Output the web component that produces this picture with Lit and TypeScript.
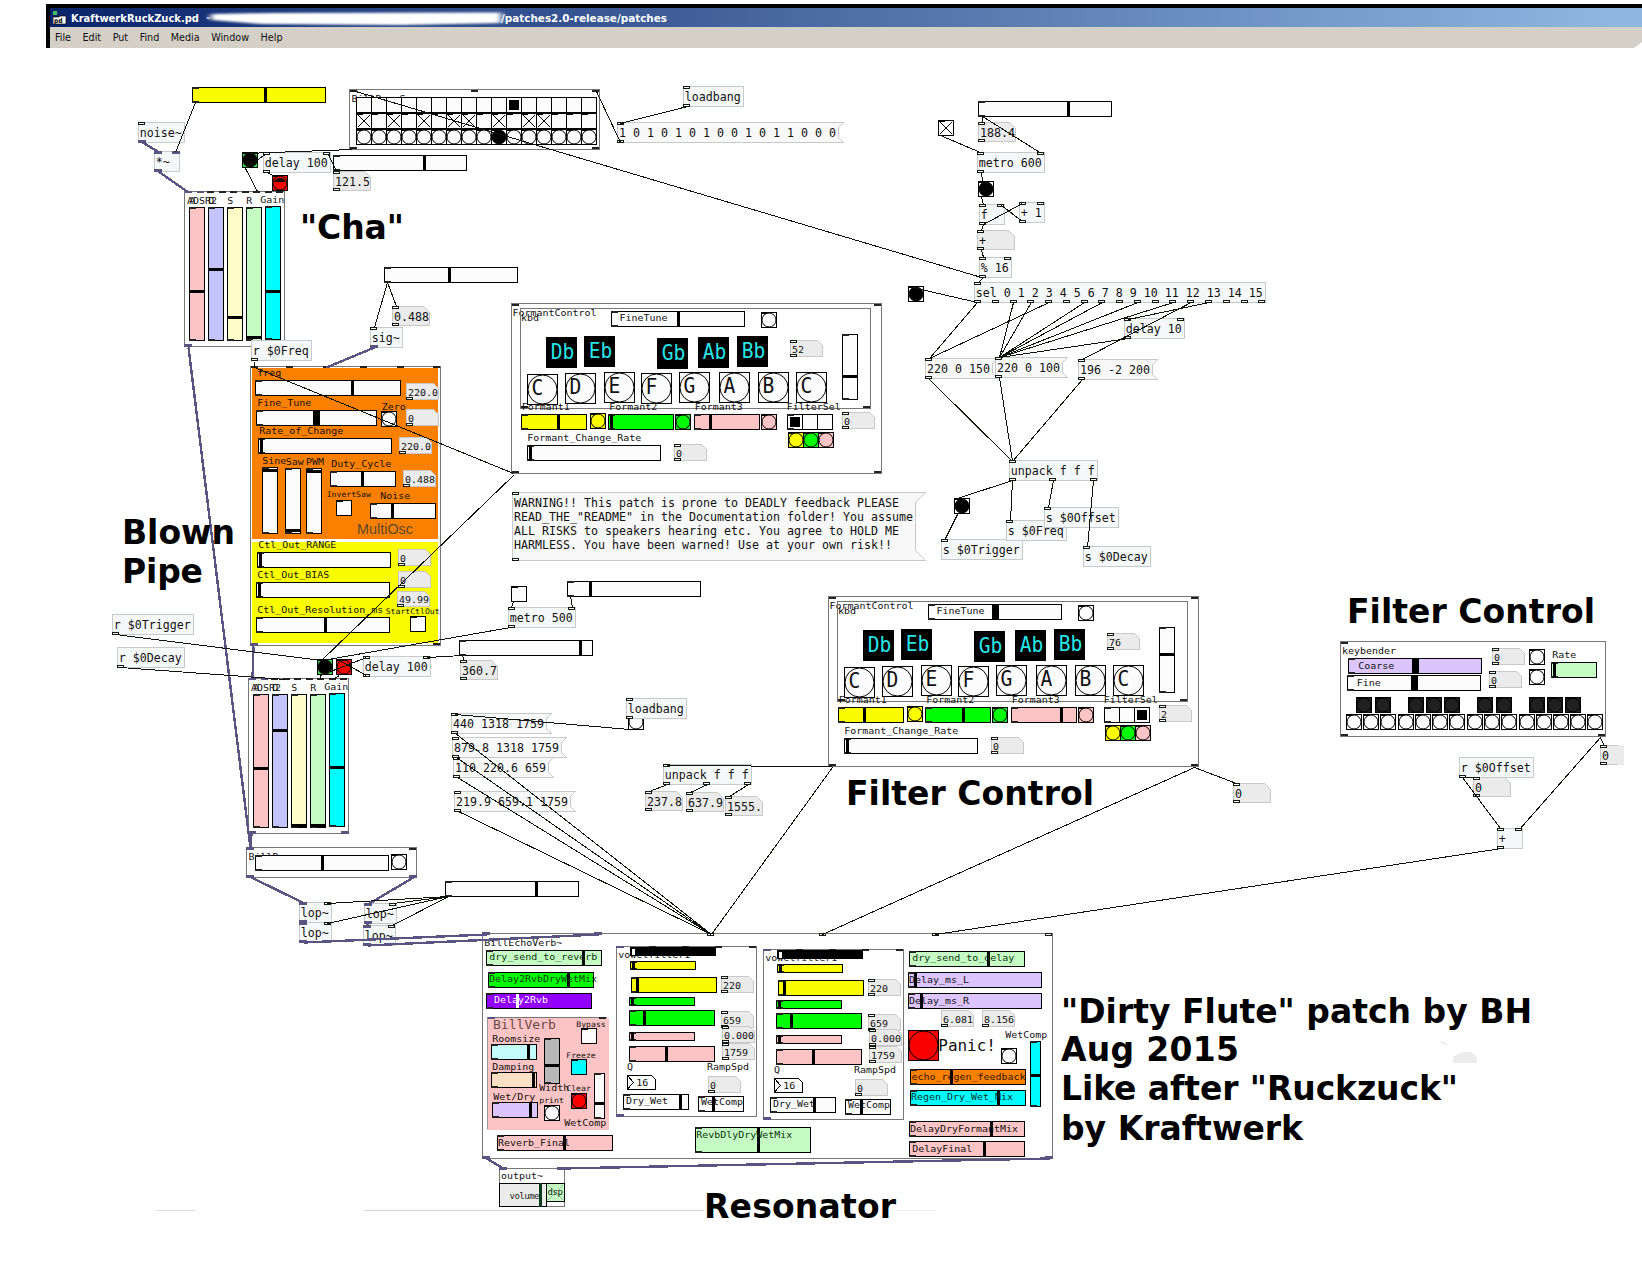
import { LitElement, html, svg, css } from "lit";
import { customElement } from "lit/decorators.js";

const PINK = "#fcc4c4";
const LILAC = "#c4c4fc";
const CREAM = "#fffcc8";
const MINT = "#c4fcc4";
const CYAN = "#00fcfc";
const YELLOW = "#fafc00";
const GREEN = "#00fc00";
const ORANGE = "#fc8000";
const VIOLET = "#dcc4fc";
const RED = "#fc0000";
const PAPER = "#fcfcfc";

type Io = [number, number?];

const box = (x: number, y: number, w: number, h: number, fill = PAPER, stroke = "#000") =>
  svg`<rect x=${x + 0.5} y=${y + 0.5} width=${w - 1} height=${h - 1} fill=${fill} stroke=${stroke}></rect>`;
const fillBox = (x: number, y: number, w: number, h: number, fill: string) =>
  svg`<rect x=${x} y=${y} width=${w} height=${h} fill=${fill}></rect>`;

// Character advance and glyph height of each patch font size
const METRICS: Record<number, [number, number]> = {
  8: [4.9, 7.6], 10: [6, 9.2], 12: [7, 12], 13: [7.85, 13], 16: [9.6, 16], 20: [11.8, 20.5],
};
const label = (x: number, y: number, s: string, size = 10, fill = "#111") => {
  const [adv, px] = METRICS[size];
  const dy = size === 10 ? -0.4 : 0;
  return svg`<text class="mono" x=${x} y=${y + dy} font-size=${px} fill=${fill} textLength=${s.length * adv} lengthAdjust="spacingAndGlyphs">${s}</text>`;
};
const caption = (x: number, y: number, s: string, w: number) =>
  svg`<text class="caption" x=${x} y=${y} textLength=${w}>${s}</text>`;

const port = (x: number, y: number) => box(x, y, 7, 3, "#fff", "#101a10");
const sigPort = (x: number, y: number) => fillBox(x, y, 8, 3, "#5a5482");
const tick = (x: number, y: number) => fillBox(x, y, 7, 2, "#222");
const ports = (x: number, y: number, list: Io[]) =>
  list.map(([dx, sig]) => (sig ? sigPort(x + dx, y) : port(x + dx, y)));

const obj = (x: number, y: number, w: number, s: string, ins: Io[] = [], outs: Io[] = []) => svg`
  ${box(x, y, w, 21, "#f5f8f8", "#c6caca")}
  ${label(x + 1.7, y + 15, s, 12)}${ports(x, y, ins)}${ports(x, y + 18, outs)}`;

const msg = (x: number, y: number, w: number, s: string, h = 21, n = 5) => svg`
  <path class="crisp" d=${`M${x + 0.5} ${y + 0.5}H${x + w - 0.5}L${x + w - n - 0.5} ${y + n + 0.5}V${y + h - n - 0.5}L${x + w - 0.5} ${y + h - 0.5}H${x + 0.5}Z`} fill="#f7f8f7" stroke="#c6caca"></path>
  ${s ? label(x + 1.9, y + 15, s, 12) : ""}${port(x, y)}${port(x, y + h - 3)}`;

const num = (x: number, y: number, s: string, o: { w?: number; h?: number; size?: number; top?: boolean; ty?: number } = {}) => {
  const { w = 38, h = 20, size = 12, top = true, ty = h - 5 } = o;
  const n = size === 12 ? 6 : 5;
  return svg`
  <path class="crisp" d=${`M${x + 0.5} ${y + 0.5}H${x + w - n - 0.5}L${x + w - 0.5} ${y + n + 0.5}V${y + h - 0.5}H${x + 0.5}Z`} fill="#ebebeb" stroke="#c8c8c8"></path>
  ${label(x + 1.9, y + ty, s, size)}${top ? port(x, y) : ""}${port(x, y + h - 3)}`;
};
const smallNum = (x: number, y: number, s: string, top = true, h = 17) =>
  num(x, y, s, { w: 33, h, size: 10, top, ty: h - 4 });

const hs = (x: number, y: number, k: number, o: { w?: number; h?: number; fill?: string; kw?: number; kc?: string } = {}) => {
  const { w = 134, h = 16, fill = PAPER, kw = 3, kc = "#000" } = o;
  return svg`${box(x, y, w, h, fill)}${tick(x, y)}${tick(x, y + h - 2)}
  ${fillBox(Math.round(k - kw / 2), y + (kc === "#000" ? 0 : 1), kw, kc === "#000" ? h : h - 2, kc)}`;
};
const vs = (x: number, y: number, h: number, k: number, fill = PAPER, w = 16) => svg`
  ${box(x, y, w, h, fill)}${tick(x, y)}${tick(x, y + h - 2)}${fillBox(x, Math.round(k - 1.5), w, 3, "#000")}`;

const bang = (x: number, y: number, fill = PAPER, dot = "none", size = 16, ring = "#000") => svg`
  ${box(x, y, size, size, fill)}
  <circle class="smooth" cx=${x + size / 2} cy=${y + size / 2} r=${size / 2 - 1} fill=${dot} stroke=${ring}></circle>
  ${size < 20 ? fillBox(x, y, 6, 2, "#000") : ""}`;
const toggle = (x: number, y: number, on = false, fill = PAPER) => svg`
  ${box(x, y, 16, 16, fill)}${fillBox(x, y, 7, 2, "#000")}
  ${on ? svg`<path class="crisp" d=${`M${x + 2} ${y + 2}l12 12m0 -12l-12 12`} stroke="#000" fill="none"></path>` : ""}`;

const frame = (x: number, y: number, w: number, h: number, fill = "#fff") => box(x, y, w, h, fill, "#777");

const adsr = (dx: number, dy: number, k: number[]) => svg`<g transform=${`translate(${dx} ${dy})`}>
  ${frame(184, 191, 101, 156)}
  ${[0, 1, 2, 3, 4, 5, 6, 7, 8].map((i) => (i < 2 ? fillBox(185 + Math.round(i * 11.5), 191, 7, 2, "#5a5482") : tick(184 + Math.round(i * 11.5), 191)))}
  ${fillBox(184, 344, 8, 3, "#5a5482")}${fillBox(277, 344, 8, 3, "#5a5482")}
  ${label(187, 204, "ADSR2")}${label(189.3, 204, "A")}${label(208.3, 204, "D")}${label(227.3, 204, "S")}${label(246.3, 204, "R")}${label(260.3, 203, "Gain")}
  ${[PINK, LILAC, CREAM, MINT, CYAN].map((c, i) => vs(189 + i * 19, i === 4 ? 206 : 207, 134, k[i], c))}
</g>`;

const naturals: [number, number, string][] = [
  [16, 71, "C"], [54, 70, "D"], [93, 69, "E"], [130, 70, "F"], [168, 69, "G"], [208, 69, "A"], [247, 69, "B"], [285, 69, "C"],
];
const sharps: [number, number, string][] = [
  [35, 34, "Db"], [73, 33, "Eb"], [146, 35, "Gb"], [187, 34, "Ab"], [226, 33, "Bb"],
];

interface FormantState { fine: number; fineW: number; note: string; bend: number; f: number[]; sel: number; }
const formant = (dx: number, dy: number, s: FormantState) => svg`<g transform=${`translate(${dx} ${dy})`}>
  ${frame(0, 0, 371, 171)}
  ${tick(1, 1)}${tick(363, 1)}${tick(1, 168)}${tick(363, 168)}
  ${label(1.5, 13, "FormantControl")}${label(10, 18, "kbd")}
  ${box(9, 5, 351, 101, "none", "#777")}${tick(10, 103)}${tick(352, 103)}
  ${hs(100, 8, s.fine, { kw: s.fineW })}${label(108.5, 18.7, "FineTune")}
  ${bang(250, 9)}
  ${sharps.map(([x, y, t]) => svg`${fillBox(x, y, 31, 31, "#000")}${label(x + 4.7, y + 21.7, t, 20, "#28e4e8")}`)}
  ${naturals.map(([x, y, t]) => svg`${bang(x, y, PAPER, "none", 31)}${label(x + 4.6, y + 21.3, t, 20)}`)}
  ${smallNum(279, 37, s.note)}
  ${vs(331, 31, 66, s.bend)}
  ${label(10.7, 107, "Formant1")}${label(98.3, 107, "Formant2")}${label(183.7, 107, "Formant3")}${label(275.7, 107, "FilterSel")}
  ${hs(10, 111, s.f[0], { w: 66, fill: YELLOW })}${bang(79, 110, YELLOW)}
  ${hs(97, 111, s.f[1], { w: 66, fill: GREEN })}${bang(164, 111, "#20e020", GREEN)}
  ${hs(183, 111, s.f[2], { w: 66, fill: PINK })}${bang(250, 111, PINK)}
  ${[0, 1, 2].map((i) => svg`${box(276 + i * 15, 111, 16, 16)}${i === s.sel ? fillBox(279 + i * 15, 114, 10, 10, "#000") : ""}`)}${tick(276, 111)}${tick(276, 125)}
  ${smallNum(331, 109, String(s.sel))}
  ${[YELLOW, GREEN, PINK].map((c, i) => bang(277 + i * 15, 129, c))}
  ${label(16.3, 138, "Formant_Change_Rate")}
  ${hs(16, 142, 19)}${smallNum(163, 141, "0")}
</g>`;

const vowel = (dx: number, dy: number, dry: number, wet: number) => svg`<g transform=${`translate(${dx} ${dy})`}>
  ${frame(0, 0, 141, 171)}
  ${fillBox(0, 0, 8, 2, "#5a5482")}${[33, 66, 99, 133].map((x) => tick(x, 0))}${fillBox(0, 168, 8, 3, "#5a5482")}
  ${label(2.3, 12.7, "vowelfilter1")}
  ${fillBox(14, 1, 86, 9, "#000")}${fillBox(16, 3, 3, 6, "#fff")}
  ${hs(14, 15, 17, { w: 66, h: 9, fill: YELLOW })}${hs(15, 31, 21.5, { w: 86, fill: YELLOW })}
  ${hs(13, 51, 16, { w: 66, h: 9, fill: GREEN })}${hs(13, 64, 28.5, { w: 86, fill: GREEN })}
  ${hs(13, 86, 16, { w: 66, h: 9, fill: PINK })}${hs(13, 100, 50.5, { w: 86, fill: PINK })}
  ${smallNum(105, 30, "220")}${smallNum(105, 65, "659")}${smallNum(106, 80, "0.000")}${smallNum(106, 97, "1759")}
  ${label(11, 124, "Q")}${label(91, 124, "RampSpd")}
  <path class="crisp" d="M11.5 129.5h24l4 4v9.5h-28z M11.5 129.5l6 7l-6 6.5" fill="#fcfcfc" stroke="#000"></path>${label(20.3, 140.3, "16")}
  ${smallNum(92, 130, "0", false)}
  ${hs(7, 148, dry, { w: 66 })}${label(10, 158, "Dry_Wet")}
  ${hs(82, 150, wet, { w: 46 })}${label(85, 159.3, "WetComp")}
</g>`;

const sequencer = () => {
  const on = [0, 2, 4, 6, 7, 9, 11, 12];
  const cells = Array.from({ length: 16 }, (_, i) => i);
  return svg`
  ${frame(349, 89, 251, 61)}${tick(350, 90)}${tick(471, 90)}${tick(592, 90)}${tick(350, 147)}${tick(592, 147)}
  ${label(351.5, 102, "BillD   S")}
  ${cells.map((i) => svg`${box(356 + i * 15, 97, 16, 16)}${i === 10 ? fillBox(359 + i * 15, 100, 10, 10, "#000") : ""}`)}
  ${cells.map((i) => toggle(356 + i * 15, 113, on.includes(i)))}
  ${cells.map((i) => bang(356 + i * 15, 129, PAPER, i === 9 ? "#000" : "none"))}`;
};

const multiOsc = () => svg`
  ${frame(250, 366, 191, 280)}${tick(251, 366)}${tick(286, 366)}${tick(323, 366)}${tick(360, 366)}${tick(397, 366)}${tick(433, 366)}
  ${fillBox(252, 368, 186, 171, ORANGE)}${fillBox(252, 542, 186, 101, YELLOW)}
  ${label(257.3, 376.2, "freq")}${hs(255, 380, 352.5, { w: 146 })}${smallNum(406, 383, "220.0", false)}
  ${label(257.3, 406, "Fine_Tune")}${hs(256, 410, 316.5, { w: 121, kw: 7 })}${label(381.7, 410.3, "Zero")}${bang(381, 411)}${smallNum(406, 409, "0", false)}
  ${label(259.3, 434, "Rate_of_Change")}${hs(258, 438, 261.5)}${smallNum(399, 437, "220.0", false)}
  ${label(262.3, 464.3, "Sine")}${label(285.7, 465, "Saw")}${label(306, 465, "PWM")}${label(331.3, 467, "Duty_Cycle")}
  ${vs(262, 467, 67, 470.5)}${vs(285, 468, 66, 530.5)}${vs(306, 468, 66, 471.5)}
  ${hs(330, 471, 362.5, { w: 66 })}${smallNum(403, 470, "0.488", false)}
  ${label(326.7, 497.3, "InvertSaw", 8)}${toggle(336, 500)}${label(380.3, 499, "Noise")}${hs(370, 503, 392.5, { w: 66 })}
  <text class="sans" x="357" y="533.5" font-size="14.4" fill="#5c4a30" textLength="56">MultiOsc</text>
  ${label(258.3, 548, "Ctl_Out_RANGE")}${hs(257, 552, 260.5)}${smallNum(398, 549, "0", false)}
  ${label(257.3, 578, "Ctl_Out_BIAS")}${hs(256, 582, 259.5)}${smallNum(398, 571, "0", false)}
  ${smallNum(397, 591, "49.99", false, 16)}
  ${label(257.3, 613, "Ctl_Out_Resolution_ms")}${label(385.7, 613.7, "StartCtlOut", 8)}${hs(256, 617, 325.5)}${toggle(410, 616)}
  ${fillBox(250, 643, 8, 3, "#5a5482")}${tick(433, 643)}`;

const keybender = () => svg`
  ${frame(1340, 641, 266, 96)}${tick(1341, 642)}${tick(1341, 734)}${tick(1598, 734)}
  ${label(1342, 654, "keybender")}
  ${hs(1348, 658, 1415.5, { kw: 7, fill: VIOLET })}${label(1358.3, 669, "Coarse")}
  ${hs(1347, 675, 1414.5, { kw: 7 })}${label(1356.7, 686, "Fine")}
  ${smallNum(1492, 648, "0")}${smallNum(1489, 671, "0")}${bang(1529, 649)}${bang(1529, 669)}
  ${label(1552.3, 658, "Rate")}${hs(1551, 662, 1554.5, { w: 46, fill: MINT })}
  ${[79, 136, 235, 289, 343, 442, 499, 598, 652, 706].map((x) => bang(1330 + Math.floor(x / 3), 697, "#202020", "none", 16, "#000"))}
  ${[49, 100, 151, 205, 256, 307, 358, 412, 463, 514, 568, 619, 670, 721, 772].map((x) => bang(1330 + Math.floor(x / 3), 714))}`;

const resonator = () => svg`
  ${frame(482, 933, 571, 226)}
  ${fillBox(482, 932, 8, 3, "#5a5482")}${fillBox(594, 932, 8, 3, "#5a5482")}${[707, 819, 932, 1045].map((x) => port(x, 933))}
  ${fillBox(482, 1156, 8, 3, "#5a5482")}${fillBox(1045, 1156, 8, 3, "#5a5482")}
  ${label(484.3, 946, "BillEchoVerb~")}
  ${hs(486, 950, 583.5, { w: 116, fill: MINT })}${label(489.3, 960, "dry_send_to_reverb", 10, "#103010")}
  ${hs(488, 972, 568.5, { w: 106, fill: GREEN })}${label(489, 982, "Delay2RvbDryWetMix", 10, "#104010")}
  ${hs(486, 993, 517.5, { w: 106, fill: "#9000fc", kc: "#fff" })}${label(494, 1003, "Delay2Rvb", 10, "#fff")}
  ${fillBox(487, 1018, 122, 112, PINK)}${fillBox(487, 1017, 120, 1, "#777")}${fillBox(487, 1018, 1, 111, "#999")}${tick(599, 1017)}${fillBox(488, 1017, 7, 2, "#5a5482")}
  ${label(493, 1029.3, "BillVerb", 13, "#6a4a48")}
  ${label(576.3, 1026.5, "Bypass", 8)}${toggle(581, 1028)}
  ${label(492.3, 1042, "Roomsize")}${hs(491, 1044, 528.5, { w: 46, fill: "#c4fcfc" })}
  ${label(492.3, 1070.3, "Damping")}${hs(491, 1072, 533.5, { w: 46, fill: "#fce0c4" })}
  ${label(493.3, 1100, "Wet/Dry")}${hs(492, 1102, 530.5, { w: 46, fill: VIOLET })}
  ${vs(544, 1038, 46, 1065.5, "#b8b8b8")}${label(539.3, 1091, "Width")}${label(566.3, 1090.5, "Clear", 8)}
  ${label(566.3, 1057.5, "Freeze", 8)}${toggle(571, 1059, false, CYAN)}${bang(571, 1093, RED)}
  ${vs(594, 1073, 46, 1103.5, PAPER, 11)}${label(539.3, 1102.5, "print", 8)}${bang(544, 1105)}${label(564.3, 1126, "WetComp")}
  ${hs(497, 1135, 564.5, { w: 116, fill: PINK })}${label(498, 1146, "Reverb_Final")}
  ${hs(695, 1127, 758.5, { w: 116, h: 26, fill: MINT })}${label(696.3, 1138, "RevbDlyDryWetMix", 10, "#103010")}
  ${vowel(616, 946, 64.5, 97.5)}${vowel(763, 949, 51.5, 98.5)}
  ${hs(909, 951, 988.5, { w: 116, fill: MINT })}${label(912.3, 961, "dry_send_to_delay", 10, "#103010")}
  ${hs(908, 972, 915.5, { fill: VIOLET })}${label(909, 983, "Delay_ms_L")}
  ${hs(908, 993, 921.5, { fill: VIOLET })}${label(909, 1004, "Delay_ms_R")}
  ${smallNum(941, 1010, "6.081", false)}${smallNum(982, 1010, "8.156", false)}
  ${bang(908, 1030, RED, "none", 31)}${label(938.3, 1050.7, "Panic!", 16)}${bang(1001, 1048)}
  ${label(1005.3, 1038, "WetComp")}${vs(1030, 1041, 66, 1075.5, CYAN, 11)}
  ${hs(910, 1069, 951.5, { w: 116, fill: ORANGE })}${label(911.5, 1080, "echo_regen_feedback", 10, "#301800")}
  ${hs(910, 1090, 998.5, { w: 116, fill: CYAN })}${label(911, 1100, "Regen_Dry_Wet_Mix", 10, "#003030")}
  ${hs(909, 1121, 991.5, { w: 116, fill: PINK })}${label(910, 1132, "DelayDryFormantMix")}
  ${hs(909, 1141, 984.5, { w: 116, fill: PINK })}${label(912.3, 1152, "DelayFinal")}
  ${frame(499, 1168, 66, 39)}${label(501, 1179.7, "output~")}
  ${box(499, 1183, 48, 24, "#ebebeb")}${fillBox(539, 1183, 3, 24, "#0c3a1c")}
  <text class="mono" x="509.5" y="1198.5" font-size="9" fill="#222" textLength="30">volume</text>
  ${box(546, 1183, 19, 19, MINT)}<path class="crisp" d="M548 1185l15 15m0 -15l-15 15" stroke="#9ab89a"></path>
  <text class="mono" x="547.5" y="1194.5" font-size="9" fill="#222" textLength="15.5">dsp</text>
  ${sigPort(499, 1167)}${sigPort(557, 1167)}`;

const selOut = (i: number) => 977.5 + i * 17.77;
const cords: number[][] = [
  [195, 102, 175, 152], [352, 149, 245, 153], [245, 168, 257, 191], [245, 168, 266, 153], [267, 172, 276, 177],
  [336, 171, 328, 154], [352, 90, 981, 277], [596, 91, 620, 142], [687, 106, 620, 123],
  [387, 282, 374, 327], [387, 282, 396, 306], [254, 361, 254, 367], [254, 367, 513, 473], [514, 474, 321, 660],
  [510, 627, 322, 660], [115, 634, 321, 660], [120, 667, 285, 679],
  [320, 675, 366, 657], [366, 675, 339, 660], [320, 675, 320, 679], [339, 675, 332, 679],
  [462, 655, 427, 657], [462, 655, 464, 661], [513, 601, 511, 607], [570, 596, 572, 607],
  [455, 714, 629, 729],
  [455, 733, 711, 934], [456, 757, 711, 934], [457, 777, 711, 934], [458, 811, 711, 934],
  [667, 784, 649, 791], [707, 784, 690, 792], [748, 784, 729, 796], [667, 765, 832, 766], [832, 767, 711, 934],
  [448, 896, 327, 903], [448, 896, 327, 923], [448, 896, 393, 903], [448, 896, 392, 925],
  [1194, 767, 1236, 783], [1194, 767, 822, 934],
  [1600, 737, 1604, 746], [1600, 737, 1519, 829], [1462, 777, 1476, 777], [1462, 777, 1500, 828], [1501, 848, 935, 934],
  [982, 116, 982, 122], [982, 116, 1041, 153], [940, 135, 980, 152], [981, 172, 982, 181], [981, 197, 983, 204],
  [983, 224, 981, 230], [983, 224, 1022, 203], [1022, 221, 1001, 205], [981, 249, 983, 257], [983, 277, 977, 283],
  [977, 302, 912, 287], [977, 302, 929, 358], [selOut(4), 302, 929, 358],
  ...[2, 3, 6, 7, 9, 11].map((i) => [selOut(i), 302, 999, 357]),
  [selOut(12), 302, 1082, 359], [selOut(13), 302, 1128, 319], [1128, 338, 999, 357],
  [929, 379, 1012, 461], [999, 377, 1012, 461], [1082, 379, 1012, 461],
  [1012, 480, 957, 498], [1012, 480, 1010, 521], [1053, 480, 1048, 507], [1093, 480, 1087, 547], [957, 514, 944, 540],
];
const signalCords: number[][] = [
  [142, 142, 159, 152], [158, 171, 188, 192], [374, 347, 326, 367], [188, 347, 250, 848], [253, 646, 252, 679],
  [251, 833, 250, 848], [251, 877, 304, 903], [413, 877, 369, 903], [303, 921, 303, 924], [367, 923, 367, 926],
  [303, 942, 486, 934], [367, 945, 598, 934], [486, 1158, 503, 1168], [1049, 1158, 561, 1168],
];
const path = (list: number[][]) => list.map(([a, b, c, d]) => `M${a + 0.5} ${b + 0.5}L${c + 0.5} ${d + 0.5}`).join("");

@customElement("pd-canvas")
export class PdCanvas extends LitElement {
  static styles = css`
    :host { display: block; }
    .sheet { display: block; }
    rect, .crisp { shape-rendering: crispEdges; }
    .mono { font-family: "DejaVu Sans Mono", monospace; white-space: pre; }
    .sans { font-family: "Liberation Sans", sans-serif; }
    .caption { font-family: "DejaVu Sans", sans-serif; font-weight: bold; font-size: 33px; fill: #000; }
    .cord { stroke: #0c140c; stroke-width: 1; fill: none; shape-rendering: crispEdges; }
    .signal { stroke: #5a5482; stroke-width: 2.4; fill: none; shape-rendering: crispEdges; }
  `;

  render() {
    return html`<svg class="sheet" width="1642" height="1218" viewBox="0 48 1642 1218">
      ${hs(192, 87, 265.5, { fill: YELLOW })}
      ${obj(138, 122, 47, "noise~", [[0]], [[0, 1]])}
      ${obj(154, 151, 26, "*~", [[0, 1], [18, 1]], [[0, 1]])}
      ${sequencer()}
      ${bang(242, 152, "#30d840", "#000")}
      ${obj(263, 152, 68, "delay 100", [[0], [60]], [[0]])}
      ${bang(272, 175, RED)}<path d="M274 182a6.5 6.5 0 0 1 12 0z" fill="#200000"></path>
      ${hs(333, 155, 424.5)}${num(333, 171, "121.5")}
      ${adsr(0, 0, [291.5, 269.5, 317.5, 337.5, 291.5])}
      ${hs(384, 267, 449.5)}${num(392, 306, "0.488")}${obj(370, 327, 33, "sig~", [[0]], [[0, 1]])}
      ${obj(251, 340, 61, "r $0Freq", [], [[0]])}
      ${multiOsc()}
      ${formant(511, 303, { fine: 167.5, fineW: 3, note: "52", bend: 73.5, f: [47.5, 100.5, 199.5], sel: 0 })}
      ${msg(512, 492, 414, "", 69, 10)}
      ${label(514, 507, "WARNING!! This patch is prone to DEADLY feedback PLEASE", 12)}
      ${label(514, 521, "READ_THE_\"README\" in the Documentation folder! You assume", 12)}
      ${label(514, 535, "ALL RISKS to speakers hearing etc. You agree to HOLD ME", 12)}
      ${label(514, 549, "HARMLESS. You have been warned! Use at your own risk!!", 12)}
      ${obj(683, 86, 61, "loadbang", [[0]], [[0]])}
      ${msg(617, 122, 227, "1 0 1 0 1 0 1 0 0 1 0 1 1 0 0 0")}

      ${hs(978, 101, 1068.5)}${toggle(938, 120, true)}${num(978, 122, "188.4")}
      ${obj(977, 152, 68, "metro 600", [[0], [60]], [[0]])}${bang(978, 181, PAPER, "#000")}
      ${obj(979, 204, 26, "f", [[0], [18]], [[0]])}${obj(1019, 202, 26, "+ 1", [[0], [18]], [[0]])}
      ${num(977, 230, "+")}${obj(979, 257, 33, "% 16", [[0], [25]], [[0]])}
      ${obj(974, 282, 292, "sel 0 1 2 3 4 5 6 7 8 9 10 11 12 13 14 15", [[0]], Array.from({ length: 17 }, (_, i) => [Math.round(i * 17.77)] as Io))}
      ${bang(908, 286, PAPER, "#000")}
      ${obj(1124, 318, 61, "delay 10", [[0], [53]], [[0]])}
      ${msg(925, 358, 73, "220 0 150")}${msg(995, 357, 73, "220 0 100")}${msg(1078, 359, 80, "196 -2 200")}
      ${obj(1009, 460, 89, "unpack f f f", [[0]], [[0], [40], [81]])}
      ${bang(954, 498, PAPER, "#000")}
      ${obj(941, 539, 82, "s $0Trigger", [[0]])}${obj(1006, 520, 61, "s $0Freq", [[0]])}
      ${obj(1044, 507, 75, "s $0Offset", [[0]])}${obj(1083, 546, 68, "s $0Decay", [[0]])}

      ${obj(112, 614, 82, "r $0Trigger", [], [[0]])}${obj(117, 647, 68, "r $0Decay", [], [[0]])}
      ${bang(317, 659, "#30d840", "#000")}${bang(336, 659, RED)}
      ${obj(363, 656, 68, "delay 100", [[0], [60]], [[0]])}
      ${hs(459, 640, 580.5)}${num(460, 660, "360.7")}
      ${toggle(511, 586)}${obj(508, 607, 68, "metro 500", [[0], [60]], [[0]])}${hs(567, 581, 590.5)}
      ${adsr(64, 487, [281.5, 243.5, 338.5, 338.5, 280.5])}
      ${bang(628, 714)}${obj(626, 698, 61, "loadbang", [[0]], [[0]])}
      ${msg(451, 713, 101, "440 1318 1759")}${msg(452, 737, 115, "879.8 1318 1759")}
      ${msg(453, 757, 101, "110 220.6 659")}${msg(454, 791, 122, "219.9 659.1 1759")}
      ${obj(663, 764, 89, "unpack f f f", [[0]], [[0], [40], [81]])}
      ${num(645, 791, "237.8")}${num(686, 792, "637.9")}${num(725, 796, "1555.")}
      ${hs(445, 881, 536.5)}
      ${frame(246, 847, 171, 31)}${label(248.5, 860.5, "BillR~")}
      ${hs(255, 855, 322.5)}${bang(391, 854)}
      ${sigPort(246, 847)}${tick(409, 848)}${sigPort(246, 875)}${sigPort(409, 875)}
      ${obj(299, 902, 33, "lop~", [[0, 1], [25]], [[0, 1]])}${obj(299, 922, 33, "lop~", [[0, 1], [25]], [[0, 1]])}
      ${obj(364, 903, 33, "lop~", [[0, 1], [25]], [[0, 1]])}${obj(363, 925, 33, "lop~", [[0, 1], [25]], [[0, 1]])}

      ${formant(828, 596, { fine: 167.5, fineW: 7, note: "76", bend: 58.5, f: [36.5, 135.5, 233.5], sel: 2 })}
      ${num(1233, 783, "0")}
      ${keybender()}
      ${num(1600, 745, "0", { w: 24 })}${fillBox(1618, 745, 6, 20, "#ebebeb")}
      ${obj(1459, 757, 75, "r $0Offset", [], [[0]])}${num(1473, 777, "0")}
      ${obj(1497, 828, 26, "+", [[0], [18]], [[0]])}
      ${resonator()}
      ${fillBox(155, 1210, 40, 1, "#ddd")}${fillBox(364, 1210, 340, 1, "#d4d4d4")}${fillBox(896, 1210, 40, 1, "#eee")}
      <path d="M1453 1057L1462 1052H1471L1477 1057V1063H1453Z" fill="#ececec"></path>
      <path d="M1441 1042l6 3" stroke="#ddd"></path>

      <path class="signal" d=${path(signalCords)}></path>
      <path class="cord" d=${path(cords)}></path>

      ${caption(300, 239, "\"Cha\"", 104)}
      ${caption(122, 544, "Blown", 113)}${caption(122, 583, "Pipe", 81)}
      ${caption(846, 805, "Filter Control", 248)}${caption(1347, 623, "Filter Control", 248)}
      ${caption(704, 1217.5, "Resonator", 192)}
      ${caption(1061, 1022.5, "\"Dirty Flute\" patch by BH", 471)}
      ${caption(1061, 1061, "Aug 2015", 178)}
      ${caption(1061, 1100, "Like after \"Ruckzuck\"", 397)}
      ${caption(1061, 1139.5, "by Kraftwerk", 242)}
    </svg>`;
  }
}

@customElement("app-root")
export class AppRoot extends LitElement {
  static styles = css`
    :host { display: block; width: 1642px; height: 1266px; overflow: hidden; background: #fff; font-family: "DejaVu Sans Condensed", "DejaVu Sans", sans-serif; }
    .window { display: flex; flex-direction: column; box-sizing: border-box; height: 48px; margin-left: 46px; padding-top: 4px; }
    .chrome { display: flex; flex-direction: column; border-top: 4px solid #000; border-left: 4px solid #000; }
    .title { display: flex; align-items: center; height: 19px; padding-left: 3px; background: linear-gradient(90deg, #0a246a, #8fb5e0 98%); color: #fff; font: bold 11.5px "DejaVu Sans Condensed", "DejaVu Sans", sans-serif; font-stretch: condensed; white-space: nowrap; }
    .glyph { margin-right: 4px; }
    .menu { display: flex; align-items: center; height: 21px; padding-left: 5px; gap: 11.5px; background: #d4d0c8; color: #111; font-size: 10.7px; font-stretch: condensed; clip-path: polygon(0 0, 100% 0, 100% 15px, calc(100% - 8px) 100%, 0 100%); }
  `;

  render() {
    return html`
      <div class="window">
        <div class="chrome">
          <div class="title">
            <svg class="glyph" width="14" height="15" viewBox="0 0 14 15">
              <rect x="0" y="1" width="4" height="4" fill="#40c060"></rect>
              <path d="M0 7h6l1 -1h6v8h-13z" fill="#f4f4f4" stroke="#000" stroke-width="0.6"></path>
              <text x="1" y="13" font-family="DejaVu Sans" font-size="6.5" fill="#000">pd</text>
            </svg>
            <svg width="640" height="19" viewBox="0 0 640 19">
              <defs>
                <filter id="soft" x="-5%" y="-40%" width="110%" height="180%"><feGaussianBlur stdDeviation="3 1"></feGaussianBlur></filter>
              </defs>
              <text x="0" y="14" fill="#fff" font-size="11" textLength="128" lengthAdjust="spacingAndGlyphs">KraftwerkRuckZuck.pd</text>
              <text x="135" y="14" fill="#aab6d8">-</text>
              <path d="M140 6L200 5L430 4.500V15L330 17L190 16L140 12Z" fill="#fff" filter="url(#soft)"></path>
              <text x="430" y="14" fill="#fff" font-size="11" textLength="166" lengthAdjust="spacingAndGlyphs">/patches2.0-release/patches</text>
            </svg>
          </div>
          <div class="menu">
            <span>File</span><span>Edit</span><span>Put</span><span>Find</span><span>Media</span><span>Window</span><span>Help</span>
          </div>
        </div>
      </div>
      <pd-canvas></pd-canvas>`;
  }
}
